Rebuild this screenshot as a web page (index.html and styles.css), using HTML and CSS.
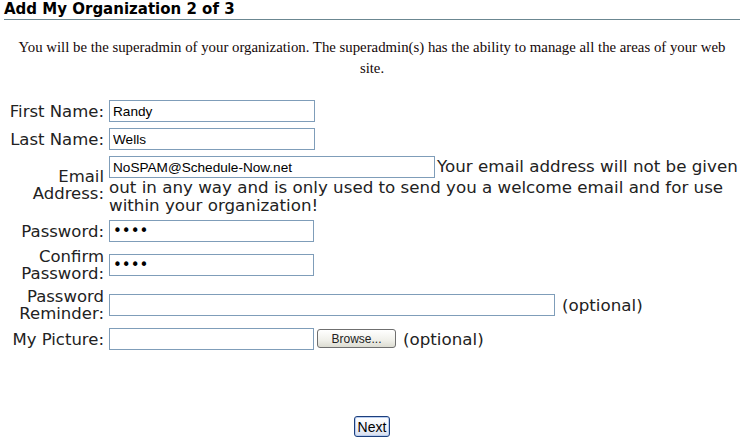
FILE: index.html
```html
<!DOCTYPE html>
<html lang="en">
  <head>
    <meta charset="UTF-8" />
    <meta name="viewport" content="width=device-width, initial-scale=1.0" />
    <title>Add My Organization</title>
    <link rel="stylesheet" href="styles.css">
  </head>
  <body>
    <div class="page">
      <h1 class="title">Add My Organization 2 of 3</h1>
      <p class="intro">
        You will be the superadmin of your organization. The superadmin(s) has the ability to manage all the areas of your web site.
      </p>
      <form class="signup" onsubmit="return false">
        <label class="lbl" for="first">First Name:</label>
        <div class="field"><input id="first" class="box w-short" type="text" value="Randy" /></div>

        <label class="lbl" for="last">Last Name:</label>
        <div class="field"><input id="last" class="box w-short" type="text" value="Wells" /></div>

        <label class="lbl" for="email">Email Address:</label>
        <div class="field">
          <input id="email" class="box w-mid inline" type="text" value="NoSPAM@Schedule-Now.net" /><span class="hint">Your email address will not be given out in any way and is only used to send you a welcome email and for use within your organization!</span>
        </div>

        <label class="lbl" for="pass">Password:</label>
        <div class="field"><input id="pass" class="box w-pass secret" type="password" value="abcd" /></div>

        <label class="lbl" for="pass2">Confirm Password:</label>
        <div class="field"><input id="pass2" class="box w-pass secret" type="password" value="abcd" /></div>

        <label class="lbl" for="remind">Password Reminder:</label>
        <div class="field"><input id="remind" class="box w-long" type="text" /><span class="opt">(optional)</span></div>

        <label class="lbl" for="pic">My Picture:</label>
        <div class="field"><input id="pic" class="box w-pass" type="text" /><button type="button" class="browse">Browse...</button><span class="opt">(optional)</span></div>

        <div class="actions">
          <button type="submit" class="next">Next</button>
        </div>
      </form>
    </div>
  </body>
</html>
```

FILE: styles.css
```css
* {
  margin: 0;
  padding: 0;
  box-sizing: border-box;
}
body {
  background: #fff;
  font-family: "DejaVu Sans", Verdana, sans-serif;
  color: #222;
}
.page {
  padding: 0 2px 0 4px;
}
.title {
  font-size: 15px;
  line-height: 19px;
  font-weight: bold;
  color: #000;
  border-bottom: 1px solid #6b8791;
}
.intro {
  margin: 17px 8px 0 8px;
  font-family: "Liberation Serif", "Times New Roman", serif;
  font-size: 14.8px;
  line-height: 21px;
  text-align: center;
  color: #140808;
}
.signup {
  margin-top: 21px;
  display: grid;
  grid-template-columns: 100px 1fr;
  column-gap: 5px;
  row-gap: 6px;
  align-items: center;
}
.lbl {
  font-size: 16.5px;
  line-height: 17px;
  text-align: right;
  color: #222;
}
.field {
  font-size: 16.7px;
  line-height: 18px;
  min-height: 22px;
}
.box {
  height: 22px;
  border: 1px solid #7f9db9;
  padding: 0 3px;
  font-family: "Liberation Sans", Arial, sans-serif;
  font-size: 13.6px;
  color: #000;
  background: #fff;
  vertical-align: top;
  outline: none;
}
.box.inline {
  vertical-align: baseline;
}
.secret {
  font-family: "DejaVu Sans", sans-serif;
  font-size: 15px;
}
.w-short {
  width: 206px;
}
.w-pass {
  width: 205px;
}
.w-mid {
  width: 326px;
}
.w-long {
  width: 446px;
}
.hint {
  padding-left: 2px;
}
.opt {
  margin-left: 7px;
  line-height: 22px;
}
.browse {
  height: 19px;
  width: 79px;
  margin: 1px 0 0 3px;
  border: 1px solid #6f6f6f;
  border-radius: 3px;
  background: linear-gradient(#ffffff, #f0f0ea 60%, #dcdcd2);
  font-family: "Liberation Sans", Arial, sans-serif;
  font-size: 12px;
  color: #222;
  vertical-align: top;
}
.actions {
  grid-column: 1 / -1;
  margin-top: 60px;
  text-align: center;
}
.next {
  height: 21px;
  width: 36px;
  border: 1px solid #1c3f7c;
  border-radius: 3px;
  background: linear-gradient(#ffffff, #eef1f8 60%, #d6deee);
  box-shadow: inset 0 0 0 1px #b9cdf0;
  font-family: "Liberation Sans", Arial, sans-serif;
  font-size: 14px;
  color: #000;
}
```
